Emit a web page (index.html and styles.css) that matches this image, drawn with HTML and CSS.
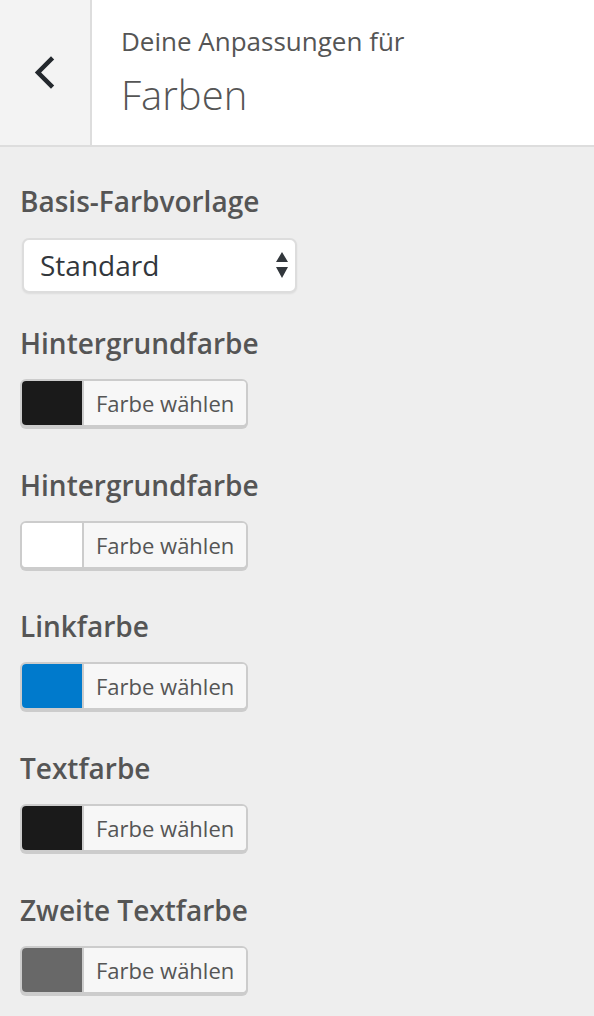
FILE: index.html
```html
<!DOCTYPE html>
<html lang="de">
<head>
<meta charset="utf-8">
<title>Farben</title>
<link rel="stylesheet" href="styles.css">
</head>
<body>
<div class="panel">
  <header class="section-header">
    <button class="back" type="button" aria-label="Zurück">
      <svg width="24" height="34" viewBox="0 0 24 34" aria-hidden="true"><path d="M18 3.5 L5 16.5 L18 29.5" fill="none" stroke="#23282d" stroke-width="4.5" stroke-linecap="square" stroke-linejoin="miter"/></svg>
    </button>
    <div class="titles">
      <span class="action">Deine Anpassungen für</span>
      <h3 class="title">Farben</h3>
    </div>
  </header>
  <div class="controls">
    <div class="control">
      <span class="control-title">Basis-Farbvorlage</span>
      <div class="select">
        <span>Standard</span>
        <svg class="arrows" width="14" height="28" viewBox="0 0 14 28" aria-hidden="true"><path d="M7 0 L13 10 L1 10 Z M1 15 L13 15 L7 26 Z" fill="#32373c"/></svg>
      </div>
    </div>
    <div class="control">
      <span class="control-title">Hintergrundfarbe</span>
      <div class="color-result"><span class="swatch" style="background:#1a1a1a"></span><span class="result-text">Farbe wählen</span></div>
    </div>
    <div class="control">
      <span class="control-title">Hintergrundfarbe</span>
      <div class="color-result"><span class="swatch" style="background:#ffffff"></span><span class="result-text">Farbe wählen</span></div>
    </div>
    <div class="control">
      <span class="control-title">Linkfarbe</span>
      <div class="color-result"><span class="swatch" style="background:#007acc"></span><span class="result-text">Farbe wählen</span></div>
    </div>
    <div class="control">
      <span class="control-title">Textfarbe</span>
      <div class="color-result"><span class="swatch" style="background:#1a1a1a"></span><span class="result-text">Farbe wählen</span></div>
    </div>
    <div class="control">
      <span class="control-title">Zweite Textfarbe</span>
      <div class="color-result"><span class="swatch" style="background:#686868"></span><span class="result-text">Farbe wählen</span></div>
    </div>
  </div>
</div>
</body>
</html>
```
FILE: styles.css
```css
html, body {
  margin: 0;
  padding: 0;
  background: #eeeeee;
  font-family: "Open Sans", "Noto Sans", sans-serif;
  color: #555d66;
}
.panel {
  width: 594px;
  min-height: 1016px;
  background: #eeeeee;
}
.section-header {
  display: flex;
  height: 145px;
  background: #ffffff;
  border-bottom: 2px solid #dddddd;
}
.back {
  width: 92px;
  flex: none;
  display: flex;
  align-items: center;
  justify-content: center;
  padding: 0;
  margin: 0;
  background: #f3f3f3;
  border: 0;
  border-right: 2px solid #dddddd;
}
.back svg {
  display: block;
  margin-left: -1px;
}
.titles {
  display: flex;
  flex-direction: column;
  padding: 24px 0 0 29px;
}
.action {
  font-size: 26px;
  line-height: 35px;
  color: #555555;
}
.title {
  margin: 9px 0 0 0;
  font-size: 40px;
  line-height: 54px;
  font-weight: 300;
  color: #555555;
}
.controls {
  display: flex;
  flex-direction: column;
  padding: 30px 0 0 20px;
}
.control {
  display: flex;
  flex-direction: column;
  align-items: flex-start;
  margin-bottom: 33.75px;
}
.control-title {
  font-size: 28px;
  line-height: 48px;
  font-weight: 600;
  color: #555555;
  margin-bottom: 12px;
}
.select {
  box-sizing: border-box;
  width: 275px;
  height: 55px;
  margin-left: 2px;
  margin-top: 1px;
  margin-bottom: -8px;
  display: flex;
  align-items: center;
  justify-content: space-between;
  padding: 0 6px 0 16px;
  background: #ffffff;
  border: 2px solid #dddddd;
  border-radius: 7px;
  box-shadow: 0 1px 2px rgba(0,0,0,0.07);
  font-size: 28px;
  color: #32373c;
}
.select span {
  margin-top: -2px;
}
.arrows {
  display: block;
}
.color-result {
  display: flex;
  height: 44px;
  border: 2px solid #cccccc;
  border-radius: 6px;
  box-shadow: 0 2px 0 #cccccc;
  overflow: hidden;
  background: #f7f7f7;
}
.swatch {
  width: 60px;
  flex: none;
}
.result-text {
  border-left: 2px solid #cccccc;
  background: #f7f7f7;
  color: #555555;
  font-size: 22px;
  line-height: 44px;
  padding: 0 12px;
}
```
